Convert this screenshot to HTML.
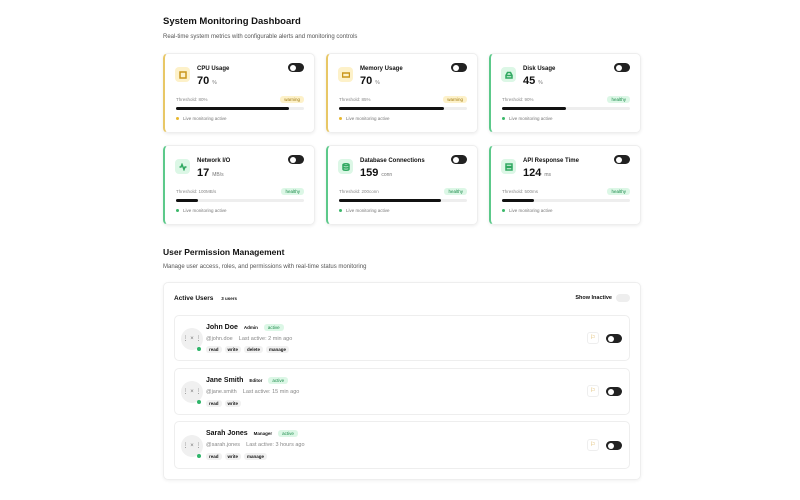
<!DOCTYPE html><html><head><style>
*{box-sizing:border-box;margin:0;padding:0}
body{width:800px;height:500px;background:#fff;font-family:"Liberation Sans",sans-serif;color:#111;position:relative;overflow:hidden}
.abs{position:absolute}
h1{position:absolute;left:163px;top:16px;font-size:9.5px;font-weight:bold}
.sub{position:absolute;font-size:6px;color:#555}
.card{position:absolute;width:152px;height:80px;border:1px solid #eee;border-radius:5px;box-shadow:0 1px 3px rgba(0,0,0,.08);border-left:2px solid}
.y{border-left-color:#e8c766}.g{border-left-color:#5cc98a}
.ic{position:absolute;left:10px;top:13px;width:15px;height:15px;border-radius:4px;display:flex;align-items:center;justify-content:center}
.y .ic{background:#fdf1c9;color:#c9961a}.g .ic{background:#dcf7e6;color:#2fa860}
.ic svg{width:8px;height:8px;fill:none;stroke:currentColor;stroke-width:1.5}
.t{position:absolute;left:32px;top:12px;font-size:6px;font-weight:bold}
.v{position:absolute;left:32px;top:21px;font-size:11px;font-weight:bold}
.v span{font-size:5px;font-weight:normal;color:#777;margin-left:3px}
.tg{position:absolute;right:10px;top:9px;width:16px;height:9px;border-radius:5px;background:#222}
.tg:after{content:"";position:absolute;left:1.5px;top:1.5px;width:6px;height:6px;border-radius:50%;background:#fff}
.th{position:absolute;left:11px;top:43px;font-size:4.5px;color:#888}
.bd{position:absolute;right:10px;top:42px;font-size:4.5px;padding:1px 4px;border-radius:3px}
.y .bd{background:#fdf1c9;color:#a07a10}.g .bd{background:#dcf7e6;color:#1a8a4a}
.bar{position:absolute;left:11px;right:10px;top:53px;height:3px;background:#eee;border-radius:2px}
.bar i{display:block;height:3px;background:#111;border-radius:2px}
.lv{position:absolute;left:11px;top:62px;font-size:4.5px;color:#777}
.lv b{display:inline-block;width:3px;height:3px;border-radius:50%;margin-right:4px}
.y .lv b{background:#e8b830}.g .lv b{background:#3cb86a}
.panel{position:absolute;left:163px;top:282px;width:478px;height:198px;border:1px solid #eee;border-radius:5px;box-shadow:0 1px 3px rgba(0,0,0,.06)}
.row{position:absolute;left:10px;width:456px;border:1px solid #eee;border-radius:5px}
.av{position:absolute;left:6px;width:22px;height:22px;border-radius:50%;background:#f0f0f0;font-size:6px;color:#777;text-align:center;line-height:22px}
.dot{position:absolute;width:4px;height:4px;border-radius:50%;background:#2fb56a}
.nm{position:absolute;left:31px;font-size:7px;font-weight:bold}
.role{font-size:4.5px;margin-left:6px;font-weight:bold}
.act{font-size:4.5px;margin-left:6px;background:#dcf7e6;color:#1a8a4a;padding:1px 4px;border-radius:3px;font-weight:normal}
.meta{position:absolute;left:31px;font-size:5.5px;color:#888}
.perm{position:absolute;left:31px;font-size:4.5px;font-weight:bold}
.perm span{background:#f1f1f1;padding:1px 3px;border-radius:3px;margin-right:3px}
.btn{position:absolute;right:30px;width:12px;height:12px;border:1px solid #eee;border-radius:3px;font-size:6px;color:#d4a43a;text-align:center;line-height:11px}
.rt{position:absolute;right:7px;width:16px;height:9px;border-radius:5px;background:#222}
.rt:after{content:"";position:absolute;left:1.5px;top:1.5px;width:6px;height:6px;border-radius:50%;background:#fff}
</style></head><body>
<h1>System Monitoring Dashboard</h1>
<div class="sub" style="left:163px;top:34px">Real-time system metrics with configurable alerts and monitoring controls</div>

<div class="card y" style="left:163px;top:53px"><div class="ic"><svg viewBox="0 0 8 8"><rect x="1" y="1" width="6" height="6"/></svg></div><div class="t">CPU Usage</div><div class="v">70<span>%</span></div><div class="tg"></div><div class="th">Threshold: 80%</div><div class="bd">warning</div><div class="bar"><i style="width:88%"></i></div><div class="lv"><b></b>Live monitoring active</div></div>
<div class="card y" style="left:326px;top:53px"><div class="ic"><svg viewBox="0 0 8 8"><rect x="0.5" y="2" width="7" height="4"/></svg></div><div class="t">Memory Usage</div><div class="v">70<span>%</span></div><div class="tg"></div><div class="th">Threshold: 85%</div><div class="bd">warning</div><div class="bar"><i style="width:82%"></i></div><div class="lv"><b></b>Live monitoring active</div></div>
<div class="card g" style="left:489px;top:53px"><div class="ic"><svg viewBox="0 0 8 8"><path d="M1 4.5h6v2.5h-6zM1 4.5l1.5-3h3l1.5 3"/></svg></div><div class="t">Disk Usage</div><div class="v">45<span>%</span></div><div class="tg"></div><div class="th">Threshold: 90%</div><div class="bd">healthy</div><div class="bar"><i style="width:50%"></i></div><div class="lv"><b></b>Live monitoring active</div></div>
<div class="card g" style="left:163px;top:145px"><div class="ic"><svg viewBox="0 0 8 8"><path d="M0.5 4h1.5l1-2.5 2 5 1-2.5h1.5"/></svg></div><div class="t">Network I/O</div><div class="v">17<span>MB/s</span></div><div class="tg"></div><div class="th">Threshold: 100MB/s</div><div class="bd">healthy</div><div class="bar"><i style="width:17%"></i></div><div class="lv"><b></b>Live monitoring active</div></div>
<div class="card g" style="left:326px;top:145px"><div class="ic"><svg viewBox="0 0 8 8"><ellipse cx="4" cy="1.8" rx="3" ry="1"/><path d="M1 1.8v4.4c0 .6 1.3 1 3 1s3-.4 3-1V1.8M1 4c0 .6 1.3 1 3 1s3-.4 3-1"/></svg></div><div class="t">Database Connections</div><div class="v">159<span>conn</span></div><div class="tg"></div><div class="th">Threshold: 200conn</div><div class="bd">healthy</div><div class="bar"><i style="width:80%"></i></div><div class="lv"><b></b>Live monitoring active</div></div>
<div class="card g" style="left:489px;top:145px"><div class="ic"><svg viewBox="0 0 8 8"><rect x="1" y="1" width="6" height="2.5"/><rect x="1" y="4.5" width="6" height="2.5"/></svg></div><div class="t">API Response Time</div><div class="v">124<span>ms</span></div><div class="tg"></div><div class="th">Threshold: 500ms</div><div class="bd">healthy</div><div class="bar"><i style="width:25%"></i></div><div class="lv"><b></b>Live monitoring active</div></div>

<div class="abs" style="left:163px;top:247px;font-size:8.5px;font-weight:bold">User Permission Management</div>
<div class="sub" style="left:163px;top:264px">Manage user access, roles, and permissions with real-time status monitoring</div>

<div class="panel">
<div class="abs" style="left:10px;top:12px;font-size:6.5px;font-weight:bold">Active Users <span style="font-size:4.5px;margin-left:6px">3 users</span></div>
<div class="abs" style="right:28px;top:12px;font-size:5.5px;font-weight:bold">Show Inactive</div>
<div class="abs" style="right:10px;top:11px;width:14px;height:8px;border-radius:4px;background:#eee"></div>

<div class="row" style="top:32px;height:46px"><div class="av" style="top:12px">⋮ × ⋮</div><div class="dot" style="left:22px;top:31px"></div><div class="nm" style="top:8px">John Doe<span class="role">Admin</span><span class="act">active</span></div><div class="meta" style="top:20px">@john.doe &nbsp;&nbsp; Last active: 2 min ago</div><div class="perm" style="top:31px"><span>read</span><span>write</span><span>delete</span><span>manage</span></div><div class="btn" style="top:16px">⚐</div><div class="rt" style="top:18px"></div></div>
<div class="row" style="top:85px;height:47px"><div class="av" style="top:12px">⋮ × ⋮</div><div class="dot" style="left:22px;top:31px"></div><div class="nm" style="top:8px">Jane Smith<span class="role">Editor</span><span class="act">active</span></div><div class="meta" style="top:20px">@jane.smith &nbsp;&nbsp; Last active: 15 min ago</div><div class="perm" style="top:32px"><span>read</span><span>write</span></div><div class="btn" style="top:16px">⚐</div><div class="rt" style="top:18px"></div></div>
<div class="row" style="top:138px;height:48px"><div class="av" style="top:13px">⋮ × ⋮</div><div class="dot" style="left:22px;top:32px"></div><div class="nm" style="top:8px">Sarah Jones<span class="role">Manager</span><span class="act">active</span></div><div class="meta" style="top:20px">@sarah.jones &nbsp;&nbsp; Last active: 3 hours ago</div><div class="perm" style="top:32px"><span>read</span><span>write</span><span>manage</span></div><div class="btn" style="top:17px">⚐</div><div class="rt" style="top:19px"></div></div>
</div>
</body></html>
